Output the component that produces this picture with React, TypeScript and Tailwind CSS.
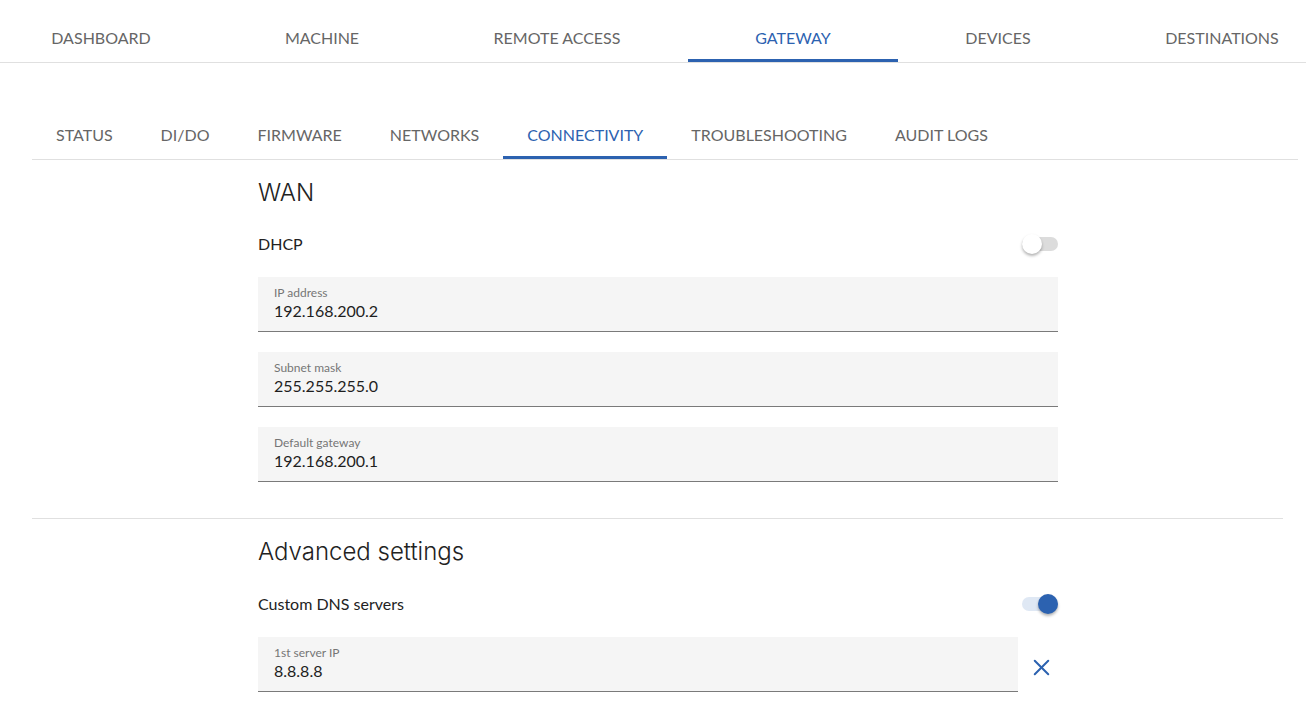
import { X } from "lucide-react";

const topTabs = [
  { label: "DASHBOARD", w: "w-[202px]" },
  { label: "MACHINE", w: "w-[240px]" },
  { label: "REMOTE ACCESS", w: "w-[230px]" },
  { label: "GATEWAY", w: "w-[210px]", active: true, ml: "ml-[16px]" },
  { label: "DEVICES", w: "w-[200px]" },
  { label: "DESTINATIONS", w: "w-[248px]" },
];

const subTabs = ["STATUS", "DI/DO", "FIRMWARE", "NETWORKS", "CONNECTIVITY", "TROUBLESHOOTING", "AUDIT LOGS"];

function Toggle({ on }: { on: boolean }) {
  return (
    <div className="relative w-[36px] h-[20px] flex items-center">
      <div className={`w-[36px] h-[14px] rounded-full ${on ? "bg-[#dfe8f4]" : "bg-[#dcdcdc]"}`} />
      <div
        className={`absolute top-0 w-[20px] h-[20px] rounded-full shadow-[0_2px_3px_rgba(0,0,0,0.3)] ${on ? "right-0 bg-[#2c62b0]" : "left-0 bg-white"}`}
      />
    </div>
  );
}

function Field({ label, value, className = "" }: { label: string; value: string; className?: string }) {
  return (
    <div className={`bg-[#f5f5f5] border-b border-[#7a7a7a] pt-[8px] pb-[10px] pl-[16px] ${className}`}>
      <div className="text-[12px] leading-4 text-[#757575]">{label}</div>
      <div className="text-[16px] leading-5 text-[#1e1e1e]">{value}</div>
    </div>
  );
}

export default function App() {
  return (
    <div className="w-[1306px] min-h-[705px] bg-white overflow-hidden font-['Lato','Noto_Sans',sans-serif]">
      <div className="flex h-[63px] border-b border-[#e0e0e0] overflow-hidden">
        {topTabs.map((t) => (
          <div
            key={t.label}
            className={`${t.w} ${t.ml ?? ""} shrink-0 h-[62px] flex justify-center pt-[27px] text-[16px] leading-[22px] ${
              t.active ? "text-[#2c62b0] border-b-[3px] border-[#2c62b0]" : "text-[#666666]"
            }`}
          >
            {t.label}
          </div>
        ))}
      </div>

      <div className="ml-[32px] w-[1266px] mt-[47px] flex border-b border-[#e0e0e0]">
        {subTabs.map((t) => (
          <div
            key={t}
            className={`h-[49px] px-[24px] pt-[15px] text-[16px] leading-5 ${
              t === "CONNECTIVITY" ? "text-[#2c62b0] border-b-[3px] border-[#2c62b0]" : "text-[#666666]"
            }`}
          >
            {t}
          </div>
        ))}
      </div>

      <div className="ml-[32px] w-[1251px]">
        <div className="ml-[226px] w-[800px]">
          <h2 className="mt-[17px] font-['Inter',sans-serif] font-light text-[24px] leading-8 text-[#222]">WAN</h2>
          <div className="mt-[23px] h-[24px] flex items-center justify-between text-[16px] text-[#222]">
            <span>DHCP</span>
            <Toggle on={false} />
          </div>
          <div className="mt-[21px] flex flex-col gap-[20px]">
            <Field label="IP address" value="192.168.200.2" />
            <Field label="Subnet mask" value="255.255.255.0" />
            <Field label="Default gateway" value="192.168.200.1" />
          </div>
        </div>

        <div className="mt-[36px] border-t border-[#e0e0e0]" />

        <div className="ml-[226px] w-[800px]">
          <h2 className="mt-[17px] font-['Inter',sans-serif] font-light text-[24px] leading-8 text-[#222]">Advanced settings</h2>
          <div className="mt-[24px] h-[24px] flex items-center justify-between text-[16px] text-[#222]">
            <span>Custom DNS servers</span>
            <Toggle on={true} />
          </div>
          <div className="mt-[21px] flex items-center">
            <Field label="1st server IP" value="8.8.8.8" className="w-[760px]" />
            <div className="flex-1 flex justify-center pl-[6px] pt-[6px]">
              <X className="w-[27px] h-[27px] text-[#2c62b0]" strokeWidth={1.8} />
            </div>
          </div>
        </div>
      </div>
    </div>
  );
}
